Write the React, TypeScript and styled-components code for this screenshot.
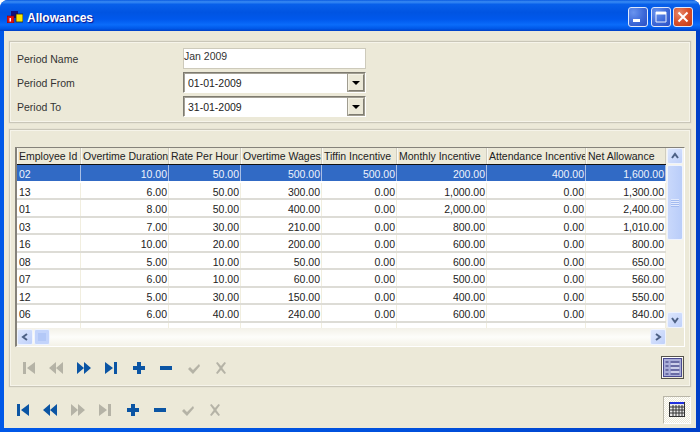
import React from "react";
import styled, { createGlobalStyle } from "styled-components";

const GlobalStyle = createGlobalStyle`
  html, body {
    margin: 0;
    padding: 0;
    background: #fff;
  }
  * {
    box-sizing: border-box;
  }
`;

const beige = "#ECE9D8";
const columns = "64px 88px 72px 81px 75px 90px 99px 80px";

const Window = styled.div`
  width: 700px;
  height: 432px;
  display: flex;
  flex-direction: column;
  overflow: hidden;
  border-radius: 8px 8px 0 0;
  background: linear-gradient(90deg, #0058e8 0%, #0050dc 60%, #0040c8 100%);
  font-family: "Liberation Sans", Arial, sans-serif;
  font-size: 10.5px;
  color: #222;
`;

const TitleBar = styled.div`
  height: 31px;
  flex: none;
  display: flex;
  align-items: center;
  padding: 3px 7px 0 7px;
  gap: 4px;
  background: linear-gradient(
    180deg,
    #0a5ae0 0%,
    #3a8cf4 6%,
    #0860ea 14%,
    #0054e2 40%,
    #0058ec 62%,
    #0a6cfa 80%,
    #0058e8 92%,
    #0040c4 100%
  );
`;

const TitleText = styled.div`
  flex: 1;
  padding-top: 1px;
  font-size: 12px;
  font-weight: bold;
  color: #fff;
  text-shadow: 1px 1px 1px #0f1089;
`;

const TitleButtons = styled.div`
  display: flex;
  gap: 2.5px;
  margin-top: -1px;
`;

const CaptionButton = styled.div<{ $close?: boolean }>`
  width: 20px;
  height: 20px;
  border: 1px solid #dfe8fb;
  border-radius: 3px;
  background: ${(p) =>
    p.$close
      ? "radial-gradient(circle at 30% 30%, #e88a6c 0%, #d9512c 50%, #c23a12 100%)"
      : "radial-gradient(circle at 25% 25%, #6a94ee 0%, #3d69d8 55%, #2b4fc4 100%)"};
  display: flex;
  align-items: center;
  justify-content: center;
`;

const Client = styled.div`
  flex: 1;
  min-height: 0;
  margin: 0 4px 4px 4px;
  padding: 10px 5px 0 5px;
  background: ${beige};
  display: flex;
  flex-direction: column;
`;

const Panel = styled.div`
  border: 1px solid #c9c6b8;
  box-shadow: inset 0 0 0 1px #f6f4ea, 0 0 0 0.5px #e0ddcf;
`;

const FormPanel = styled(Panel)`
  height: 82px;
  flex: none;
  padding: 6px 0 0 7px;
  display: grid;
  grid-template-columns: 166px 183px;
  grid-auto-rows: 21px;
  row-gap: 3px;
  align-items: center;
`;

const Label = styled.div`
  color: #333;
`;

const TextInput = styled.div`
  height: 21px;
  padding: 1px 0 0 0;
  background: #fff;
  border: 1px solid #cdcabb;
  color: #333;
`;

const DateBox = styled.div`
  height: 21px;
  padding-left: 4px;
  display: flex;
  align-items: center;
  justify-content: space-between;
  background: #fff;
  border-style: solid;
  border-width: 1px;
  border-color: #7e7b70 #fff #fff #7e7b70;
  box-shadow: inset 1px 1px 0 #a5a297;
`;

const DropButton = styled.div`
  width: 16px;
  height: 17px;
  margin-right: 1px;
  display: flex;
  align-items: center;
  justify-content: center;
  background: ${beige};
  border: 1px solid;
  border-color: #f4f2e6 #807d72 #807d72 #f4f2e6;
  outline: 1px solid #a09d90;
`;

const Arrow = styled.div`
  width: 0;
  height: 0;
  border-left: 4px solid transparent;
  border-right: 4px solid transparent;
  border-top: 4px solid #000;
`;

const GridPanel = styled(Panel)`
  height: 258px;
  margin-top: 6px;
  flex: none;
  padding: 17px 5px 0 5px;
  display: flex;
  flex-direction: column;
`;

const GridFrame = styled.div`
  height: 200px;
  flex: none;
  display: grid;
  grid-template-columns: 1fr 18px;
  grid-template-rows: 1fr 18px;
  border-left: 2px solid #85827a;
  border-top: 1px solid #85827a;
  border-right: 1px solid #fff;
  border-bottom: 1px solid #fff;
  background: ${beige};
`;

const TableArea = styled.div`
  overflow: hidden;
  background: #fff;
`;

const HeaderRow = styled.div`
  height: 17px;
  display: grid;
  grid-template-columns: ${columns};
  background: ${beige};
  border-bottom: 1px solid #111;
`;

const HeaderCell = styled.div`
  padding: 2px 0 0 1px;
  white-space: nowrap;
  overflow: hidden;
  color: #222;
  border-left: 1px solid #fbfaf4;
  border-right: 1px solid #d0cdbf;
`;

const Row = styled.div<{ $selected?: boolean }>`
  height: 17.5px;
  display: grid;
  grid-template-columns: ${columns};
  background: ${(p) => (p.$selected ? "#316AC5" : "#fff")};
  color: ${(p) => (p.$selected ? "#eef3fc" : "#222")};
  border-bottom: 2px solid ${(p) => (p.$selected ? "#fff" : "#dddcd6")};
`;

const Cell = styled.div<{ $left?: boolean; $selected?: boolean }>`
  padding: 3px 1px 0 2px;
  text-align: ${(p) => (p.$left ? "left" : "right")};
  white-space: nowrap;
  border-right: 1px solid ${(p) => (p.$selected ? "#a9bfe6" : "#f1eedf")};
`;

const VScroll = styled.div`
  display: flex;
  flex-direction: column;
  padding: 0 1px 0 1px;
  background: #f5f3ea;
`;

const HScroll = styled.div`
  display: flex;
  align-items: center;
  justify-content: space-between;
  background: linear-gradient(180deg, #f3f1e8 0%, #fdfdfa 50%, #f4f2e8 100%);
`;

const Corner = styled.div`
  background: ${beige};
`;

const ScrollButton = styled.div`
  width: 16px;
  height: 16px;
  flex: none;
  display: flex;
  align-items: center;
  justify-content: center;
  border: 1px solid #eef3fe;
  border-radius: 2px;
  background: linear-gradient(135deg, #dce6fd 0%, #c0d1fa 100%);
`;

const VThumb = styled.div`
  height: 75px;
  margin-top: 1px;
  display: flex;
  align-items: center;
  justify-content: center;
  border: 1px solid #eef3fe;
  border-radius: 2px;
  background: linear-gradient(90deg, #c9d8fb 0%, #b9cdf9 100%);
`;

const VTrack = styled.div`
  flex: 1;
`;

const HThumb = styled.div`
  width: 16px;
  height: 16px;
  margin-left: 1px;
  display: flex;
  align-items: center;
  justify-content: center;
  border: 1px solid #eef3fe;
  border-radius: 2px;
  background: #c3d4fb;
`;

const HLeft = styled.div`
  display: flex;
`;

const GripLines = styled.div`
  width: 8px;
  height: 8px;
  background: repeating-linear-gradient(180deg, #e2eafd 0 1px, #a3bbf0 1px 2px);
`;

const SmallGrip = styled.div`
  width: 8px;
  height: 8px;
  background: #b3c8f7;
`;

const Toolbar = styled.div`
  flex: 1;
  display: flex;
  align-items: center;
`;

const NavButton = styled.div`
  width: 27.5px;
  height: 22px;
  flex: none;
  display: flex;
  align-items: center;
  justify-content: center;
`;

const GridToolbar = styled(Toolbar)`
  padding: 2px 1px 0 0;
`;

const Spacer = styled.div`
  flex: 1;
`;

const SunkenToggle = styled.div`
  width: 23px;
  height: 23px;
  display: flex;
  align-items: center;
  justify-content: center;
  border: 1px solid #55534c;
  background: ${beige};
  box-shadow: inset 1px 1px 0 #fff;
`;

const FooterBar = styled(Toolbar)`
  min-height: 0;
  padding-top: 4px;
`;

const CheckedToggle = styled.div`
  width: 28px;
  height: 28px;
  display: flex;
  align-items: center;
  justify-content: center;
  border: 1px solid;
  border-color: #b9b6a8 #fff #fff #b9b6a8;
  background: repeating-conic-gradient(#fff 0 25%, #ece9d8 0 50%) 0 0 / 2px 2px;
`;

type NavKind = "first" | "prev" | "next" | "last" | "plus" | "minus" | "check" | "cross";

const navPaths: Record<NavKind, React.ReactNode> = {
  first: <path d="M1 1h3v12H1zM13 1v12L5 7z" />,
  prev: <path d="M7 1v12L0 7zM14 1v12L7 7z" />,
  next: <path d="M0 1v12l7-6zM7 1v12l7-6z" />,
  last: <path d="M1 1v12l8-6zM10 1h3v12h-3z" />,
  plus: <path d="M5 1h4v4h4v4H9v4H5V9H1V5h4z" />,
  minus: <path d="M1 5h12v4H1z" />,
  check: <path d="M1 8l2-2 3 3 6-6 1 2-7 8z" />,
  cross: <path d="M2 2l1.5-1L7 5l3.5-4L12 2 8.3 7l3.7 5-1.5 1L7 9l-3.5 4L2 12l3.7-5z" />,
};

const NavIcon = ({ kind, off }: { kind: NavKind; off?: boolean }) => (
  <svg width="14" height="14" viewBox="0 0 14 14" fill={off ? "#b5b3a6" : "#0b55a4"}>
    {navPaths[kind]}
  </svg>
);

const AppIcon = () => (
  <svg width="16" height="12" viewBox="0 0 16 12">
    <rect x="4" y="0" width="7" height="7" fill="#10107a" />
    <rect x="0" y="5" width="7" height="7" fill="#e01010" stroke="#600" strokeWidth="0.5" />
    <rect x="2.5" y="7" width="1.5" height="3.5" fill="#fff" />
    <rect x="9" y="3" width="7" height="8" fill="#f6e800" stroke="#222" strokeWidth="0.8" />
  </svg>
);

const ListIcon = () => (
  <svg width="19" height="19" viewBox="0 0 19 19">
    <rect x="0.5" y="0.5" width="18" height="18" fill="#a9add8" stroke="#4a4a90" />
    <path d="M2.5 4h3M7.5 4h9M2.5 8h3M7.5 8h9M2.5 12h3M7.5 12h9M2.5 16h3M7.5 16h9" stroke="#2d2d70" strokeWidth="1.2" />
    <path d="M8 6h8M8 10h8M8 14h8" stroke="#f0f1fa" />
  </svg>
);

const CalendarIcon = () => (
  <svg width="16" height="15" viewBox="0 0 16 15">
    <rect x="0.5" y="0.5" width="15" height="14" fill="#e8e8e8" stroke="#333" />
    <rect x="1" y="0" width="14" height="2" fill="#2030e0" />
    <path d="M1 5h14M1 8h14M1 11h14M4 3v11M7 3v11M10 3v11M13 3v11" stroke="#333" />
  </svg>
);

const Chevron = ({ dir }: { dir: "up" | "down" | "left" | "right" }) => {
  const points = {
    up: "2,7 5,3 8,7",
    down: "2,3 5,7 8,3",
    left: "7,2 3,5 7,8",
    right: "3,2 7,5 3,8",
  }[dir];
  return (
    <svg width="10" height="10" viewBox="0 0 10 10">
      <polyline points={points} fill="none" stroke="#4d6185" strokeWidth="2" />
    </svg>
  );
};

const headers = [
  "Employee Id",
  "Overtime Duration",
  "Rate Per Hour",
  "Overtime Wages",
  "Tiffin Incentive",
  "Monthly Incentive",
  "Attendance Incentive",
  "Net Allowance",
];

const rows = [
  ["02", "10.00", "50.00", "500.00", "500.00", "200.00", "400.00", "1,600.00"],
  ["13", "6.00", "50.00", "300.00", "0.00", "1,000.00", "0.00", "1,300.00"],
  ["01", "8.00", "50.00", "400.00", "0.00", "2,000.00", "0.00", "2,400.00"],
  ["03", "7.00", "30.00", "210.00", "0.00", "800.00", "0.00", "1,010.00"],
  ["16", "10.00", "20.00", "200.00", "0.00", "600.00", "0.00", "800.00"],
  ["08", "5.00", "10.00", "50.00", "0.00", "600.00", "0.00", "650.00"],
  ["07", "6.00", "10.00", "60.00", "0.00", "500.00", "0.00", "560.00"],
  ["12", "5.00", "30.00", "150.00", "0.00", "400.00", "0.00", "550.00"],
  ["06", "6.00", "40.00", "240.00", "0.00", "600.00", "0.00", "840.00"],
  ["", "", "", "", "", "", "", ""],
];

const navKinds: NavKind[] = ["first", "prev", "next", "last", "plus", "minus", "check", "cross"];

const App: React.FC = () => {
  return (
    <Window>
      <GlobalStyle />
      <TitleBar>
        <AppIcon />
        <TitleText>Allowances</TitleText>
        <TitleButtons>
          <CaptionButton>
            <svg width="12" height="12" viewBox="0 0 12 12">
              <rect x="1" y="8" width="7" height="3" fill="#fff" />
            </svg>
          </CaptionButton>
          <CaptionButton>
            <svg width="12" height="12" viewBox="0 0 12 12">
              <path d="M1 1h10v10H1z" fill="none" stroke="#e8eefc" />
              <rect x="1" y="1" width="10" height="2.5" fill="#fff" />
            </svg>
          </CaptionButton>
          <CaptionButton $close>
            <svg width="12" height="12" viewBox="0 0 12 12">
              <path d="M1.5 1.5l9 9M10.5 1.5l-9 9" stroke="#fff" strokeWidth="2" />
            </svg>
          </CaptionButton>
        </TitleButtons>
      </TitleBar>
      <Client>
        <FormPanel>
          <Label>Period Name</Label>
          <TextInput>Jan 2009</TextInput>
          <Label>Period From</Label>
          <DateBox>
            01-01-2009
            <DropButton>
              <Arrow />
            </DropButton>
          </DateBox>
          <Label>Period To</Label>
          <DateBox>
            31-01-2009
            <DropButton>
              <Arrow />
            </DropButton>
          </DateBox>
        </FormPanel>
        <GridPanel>
          <GridFrame>
            <TableArea>
              <HeaderRow>
                {headers.map((h) => (
                  <HeaderCell key={h}>{h}</HeaderCell>
                ))}
              </HeaderRow>
              {rows.map((row, i) => (
                <Row key={i} $selected={i === 0}>
                  {row.map((value, c) => (
                    <Cell key={c} $left={c === 0} $selected={i === 0}>
                      {value}
                    </Cell>
                  ))}
                </Row>
              ))}
            </TableArea>
            <VScroll>
              <ScrollButton>
                <Chevron dir="up" />
              </ScrollButton>
              <VThumb>
                <GripLines />
              </VThumb>
              <VTrack />
              <ScrollButton>
                <Chevron dir="down" />
              </ScrollButton>
            </VScroll>
            <HScroll>
              <HLeft>
                <ScrollButton>
                  <Chevron dir="left" />
                </ScrollButton>
                <HThumb>
                  <SmallGrip />
                </HThumb>
              </HLeft>
              <ScrollButton>
                <Chevron dir="right" />
              </ScrollButton>
            </HScroll>
            <Corner />
          </GridFrame>
          <GridToolbar>
            {navKinds.map((kind, i) => (
              <NavButton key={kind}>
                <NavIcon kind={kind} off={i < 2 || i > 5} />
              </NavButton>
            ))}
            <Spacer />
            <SunkenToggle>
              <ListIcon />
            </SunkenToggle>
          </GridToolbar>
        </GridPanel>
        <FooterBar>
          {navKinds.map((kind, i) => (
            <NavButton key={kind}>
              <NavIcon kind={kind} off={(i > 1 && i < 4) || i > 5} />
            </NavButton>
          ))}
          <Spacer />
          <CheckedToggle>
            <CalendarIcon />
          </CheckedToggle>
        </FooterBar>
      </Client>
    </Window>
  );
};

export default App;
